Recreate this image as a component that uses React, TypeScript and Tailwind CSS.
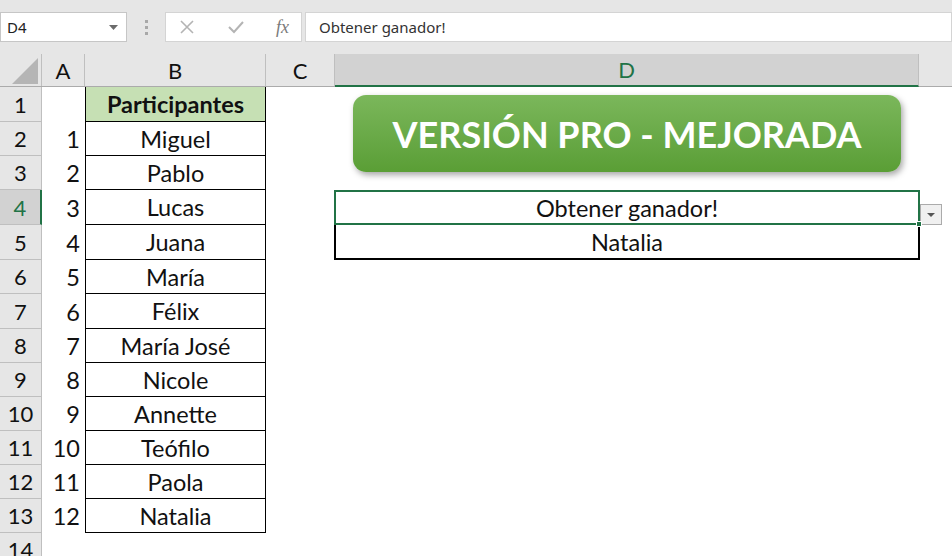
import React from "react";

const cellFont = { fontFamily: "Lato, 'Open Sans', sans-serif" };

const names = [
  "Miguel",
  "Pablo",
  "Lucas",
  "Juana",
  "María",
  "Félix",
  "María José",
  "Nicole",
  "Annette",
  "Teófilo",
  "Paola",
  "Natalia",
];

const rowHeights = [35, 34, 34, 35, 35, 34, 35, 34, 34, 34, 34, 34, 34, 34];

const Toolbar = () => (
  <div className="h-[54px] bg-[#e6e6e6] flex items-start pt-[12px] relative">
    {/* name box */}
    <div className="w-[127px] h-[30px] bg-white border border-[#c6c6c6] flex items-center justify-between pl-[6px] pr-[8px]">
      <span className="text-[15px] text-[#222]" style={{ fontFamily: "'Noto Sans', sans-serif" }}>D4</span>
      <svg width="9" height="5" viewBox="0 0 9 5">
        <polygon points="0,0 9,0 4.5,5" fill="#6b6b6b" />
      </svg>
    </div>
    {/* grip dots */}
    <div className="w-[38px] h-[30px] flex flex-col items-center justify-center gap-[3px]">
      <div className="w-[3px] h-[3px] bg-[#a8a8a8]" />
      <div className="w-[3px] h-[3px] bg-[#a8a8a8]" />
      <div className="w-[3px] h-[3px] bg-[#a8a8a8]" />
    </div>
    {/* cancel / enter / fx */}
    <div className="w-[137px] h-[30px] bg-white border border-[#d4d4d4] flex items-center pl-[13px] pr-[12px] justify-between">
      <svg width="16" height="16" viewBox="0 0 16 16">
        <path d="M2 2 L14 14 M14 2 L2 14" stroke="#b4b4b4" strokeWidth="1.6" fill="none" />
      </svg>
      <svg width="18" height="16" viewBox="0 0 18 16">
        <path d="M2 8 L7 13 L16 3" stroke="#b4b4b4" strokeWidth="2" fill="none" />
      </svg>
      <span
        className="text-[18px] italic text-[#7a7a7a] leading-none"
        style={{ fontFamily: "'Liberation Serif', serif" }}
      >
        fx
      </span>
    </div>
    {/* formula input */}
    <div
      className="ml-[3px] flex-1 h-[30px] bg-white border border-[#d4d4d4] flex items-center pl-[13px] text-[15px] text-[#333]"
      style={{ fontFamily: "'Noto Sans', sans-serif" }}
    >
      Obtener ganador!
    </div>
  </div>
);

const ColumnHeaders = () => (
  <div className="h-[33px] flex bg-[#e6e6e6] border-b border-[#ababab] text-[22px] text-[#111]" style={cellFont}>
    <div className="w-[42px] border-r border-[#bfbfbf] relative shrink-0">
      <svg className="absolute left-[12px] top-[4px]" width="26" height="26" viewBox="0 0 26 26">
        <polygon points="26,0 26,26 0,26" fill="#b5b5b5" />
      </svg>
    </div>
    <div className="w-[43px] border-r border-[#bfbfbf] flex items-center justify-center shrink-0">A</div>
    <div className="w-[181px] border-r border-[#bfbfbf] flex items-center justify-center shrink-0">B</div>
    <div className="w-[69px] border-r border-[#bfbfbf] flex items-center justify-center shrink-0">C</div>
    <div className="w-[584px] bg-[#d2d2d2] border-r border-[#bfbfbf] flex items-center justify-center shrink-0 text-[#217346] border-b-2 border-b-[#217346] -mb-[1px]">
      D
    </div>
    <div className="flex-1" />
  </div>
);

export default function App() {
  return (
    <div className="w-[952px] h-[556px] overflow-hidden bg-white relative select-none">
      <Toolbar />
      <ColumnHeaders />
      <div className="relative" style={cellFont}>
        {rowHeights.map((h, i) => {
          const row = i + 1;
          const selected = row === 4;
          return (
            <div key={row} className="flex text-[23.5px] text-[#111]" style={{ height: h }}>
              <div
                className={
                  selected
                    ? "w-[42px] shrink-0 bg-[#d2d2d2] border-b border-[#bfbfbf] border-r-2 border-r-[#217346] flex items-center justify-center text-[#217346] text-[22px]"
                    : "w-[42px] shrink-0 bg-[#e6e6e6] border-b border-[#bfbfbf] border-r border-r-[#bfbfbf] flex items-center justify-center text-[22px]"
                }
              >
                {row}
              </div>
              <div className="w-[43px] shrink-0 flex items-center justify-end pr-[5px] pt-[2px]">
                {row >= 2 && row <= 13 ? row - 1 : ""}
              </div>
              {row === 1 ? (
                <div className="w-[181px] shrink-0 bg-[#c6e0b4] border-x border-b border-black flex items-center justify-center font-bold pt-[2px]">
                  Participantes
                </div>
              ) : row <= 13 ? (
                <div className="w-[181px] shrink-0 border-x border-b border-black flex items-center justify-center pt-[2px]">
                  {names[row - 2]}
                </div>
              ) : (
                <div className="w-[181px] shrink-0" />
              )}
              <div className="w-[68px] shrink-0" />
              {row === 4 ? (
                <div className="w-[586px] shrink-0 border-2 border-[#217346] flex items-center justify-center relative pt-[2px]">
                  Obtener ganador!
                  <div className="absolute right-[-4px] bottom-[-4px] w-[6px] h-[6px] bg-[#217346] border border-white z-10" />
                </div>
              ) : row === 5 ? (
                <div className="w-[586px] shrink-0 border-x-2 border-b-2 border-black flex items-center justify-center pt-[2px]">
                  Natalia
                </div>
              ) : (
                <div className="w-[586px] shrink-0" />
              )}
              <div className="flex-1 relative">
                {row === 4 && (
                  <div className="absolute left-[0px] top-[14px] w-[22px] h-[21px] bg-[#f0f0f0] border border-[#ababab] flex items-center justify-center">
                    <svg width="8" height="4" viewBox="0 0 8 4">
                      <polygon points="0,0 8,0 4,4" fill="#555" />
                    </svg>
                  </div>
                )}
              </div>
            </div>
          );
        })}
        {/* shape button floating over the sheet */}
        <div className="absolute left-[353px] top-[8px] w-[548px] h-[77px] rounded-[13px] bg-gradient-to-b from-[#7bb75b] to-[#5a9e35] shadow-[2px_3px_6px_rgba(0,0,0,0.35)] flex items-center justify-center">
          <span className="text-white font-bold text-[36px] leading-none" style={cellFont}>
            VERSIÓN PRO - MEJORADA
          </span>
        </div>
      </div>
    </div>
  );
}
